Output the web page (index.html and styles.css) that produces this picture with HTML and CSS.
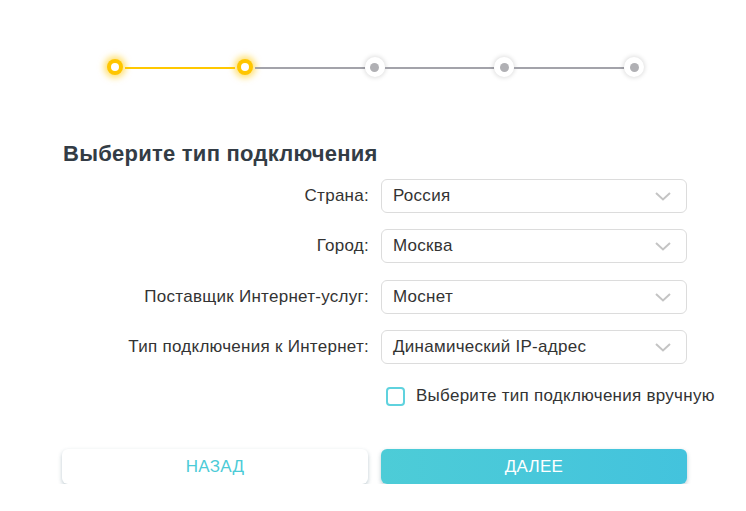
FILE: index.html
```html
<!DOCTYPE html>
<html lang="ru">
<head>
<meta charset="utf-8">
<link rel="stylesheet" href="styles.css">
</head>
<body>
<div class="page">
  <div class="stepper">
    <span class="dot done"></span>
    <span class="line done"></span>
    <span class="dot done"></span>
    <span class="line"></span>
    <span class="dot"></span>
    <span class="line"></span>
    <span class="dot"></span>
    <span class="line"></span>
    <span class="dot"></span>
  </div>

  <h1 class="title">Выберите тип подключения</h1>

  <div class="form">
    <label class="label">Страна:</label>
    <div class="select"><span>Россия</span><svg class="chev" viewBox="0 0 16 9" width="16" height="9"><polyline points="1,1 8,7.5 15,1" fill="none" stroke="#c4c4c4" stroke-width="2"/></svg></div>

    <label class="label">Город:</label>
    <div class="select"><span>Москва</span><svg class="chev" viewBox="0 0 16 9" width="16" height="9"><polyline points="1,1 8,7.5 15,1" fill="none" stroke="#c4c4c4" stroke-width="2"/></svg></div>

    <label class="label">Поставщик Интернет-услуг:</label>
    <div class="select"><span>Моснет</span><svg class="chev" viewBox="0 0 16 9" width="16" height="9"><polyline points="1,1 8,7.5 15,1" fill="none" stroke="#c4c4c4" stroke-width="2"/></svg></div>

    <label class="label">Тип подключения к Интернет:</label>
    <div class="select"><span>Динамический IP-адрес</span><svg class="chev" viewBox="0 0 16 9" width="16" height="9"><polyline points="1,1 8,7.5 15,1" fill="none" stroke="#c4c4c4" stroke-width="2"/></svg></div>

    <span></span>
    <div class="check"><span class="box"></span><span>Выберите тип подключения вручную</span></div>
  </div>

  <div class="buttons">
    <button class="btn back">НАЗАД</button>
    <button class="btn next">ДАЛЕЕ</button>
  </div>
</div>
</body>
</html>
```

FILE: styles.css
```css
html, body {
  margin: 0;
  padding: 0;
  background: #ffffff;
}
body {
  font-family: "Liberation Sans", Arial, sans-serif;
  color: #333333;
}
.page {
  width: 625px;
  margin-left: 62px;
  padding-top: 57px;
}
.stepper {
  display: flex;
  align-items: center;
  margin: 0 43px 0 43px;
  height: 20px;
}
.dot {
  flex: none;
  width: 20px;
  height: 20px;
  border-radius: 50%;
  background: #ffffff;
  box-shadow: 0 0 4px 1px rgba(0, 0, 0, 0.13);
  display: flex;
  align-items: center;
  justify-content: center;
}
.dot::after {
  content: "";
  width: 9px;
  height: 9px;
  border-radius: 50%;
  background: #b0b0b4;
}
.dot.done {
  width: 16px;
  height: 16px;
  margin: 0 2px;
  background: #ffc600;
  box-shadow: 0 0 6px 3px rgba(255, 200, 0, 0.55);
}
.dot.done::after {
  width: 8px;
  height: 8px;
  background: #ffffff;
}
.line {
  flex: 1;
  height: 2px;
  margin-top: 1px;
  background: #a3a3aa;
}
.line.done {
  background: #ffc800;
}
.title {
  margin: 65px 0 0 1px;
  font-size: 22px;
  letter-spacing: 0.25px;
  font-weight: bold;
  color: #333c45;
  line-height: 24px;
}
.form {
  display: grid;
  grid-template-columns: 1fr 306px;
  column-gap: 12px;
  row-gap: 16.33px;
  margin-top: 13px;
  align-items: center;
}
.label {
  text-align: right;
  font-size: 17px;
  letter-spacing: 0.27px;
  color: #333333;
}
.select {
  box-sizing: border-box;
  height: 34px;
  border: 1px solid #dcdcdc;
  border-radius: 6px;
  display: flex;
  align-items: center;
  justify-content: space-between;
  padding: 0 15px 0 11px;
  font-size: 17px;
  letter-spacing: 0.27px;
  color: #333333;
}
.chev {
  display: block;
  margin-top: 1px;
}
.check {
  display: flex;
  align-items: center;
  gap: 11px;
  padding-left: 5px;
  margin-top: 6px;
  font-size: 17px;
  letter-spacing: 0.27px;
  white-space: nowrap;
  color: #333333;
}
.box {
  flex: none;
  box-sizing: border-box;
  width: 19px;
  height: 19px;
  border: 2px solid #5fd2de;
  border-radius: 4px;
}
.buttons {
  display: flex;
  gap: 13px;
  margin-top: 43px;
}
.btn {
  flex: 1;
  height: 35px;
  border: none;
  border-radius: 6px;
  font-family: "Liberation Sans", Arial, sans-serif;
  font-size: 17px;
  letter-spacing: 0.27px;
  box-shadow: 0 2px 4px rgba(40, 80, 100, 0.3);
  cursor: pointer;
}
.back {
  background: #ffffff;
  color: #4ccbd7;
}
.next {
  background: linear-gradient(90deg, #4dccd7, #43c3dd);
  color: #ffffff;
}
```
